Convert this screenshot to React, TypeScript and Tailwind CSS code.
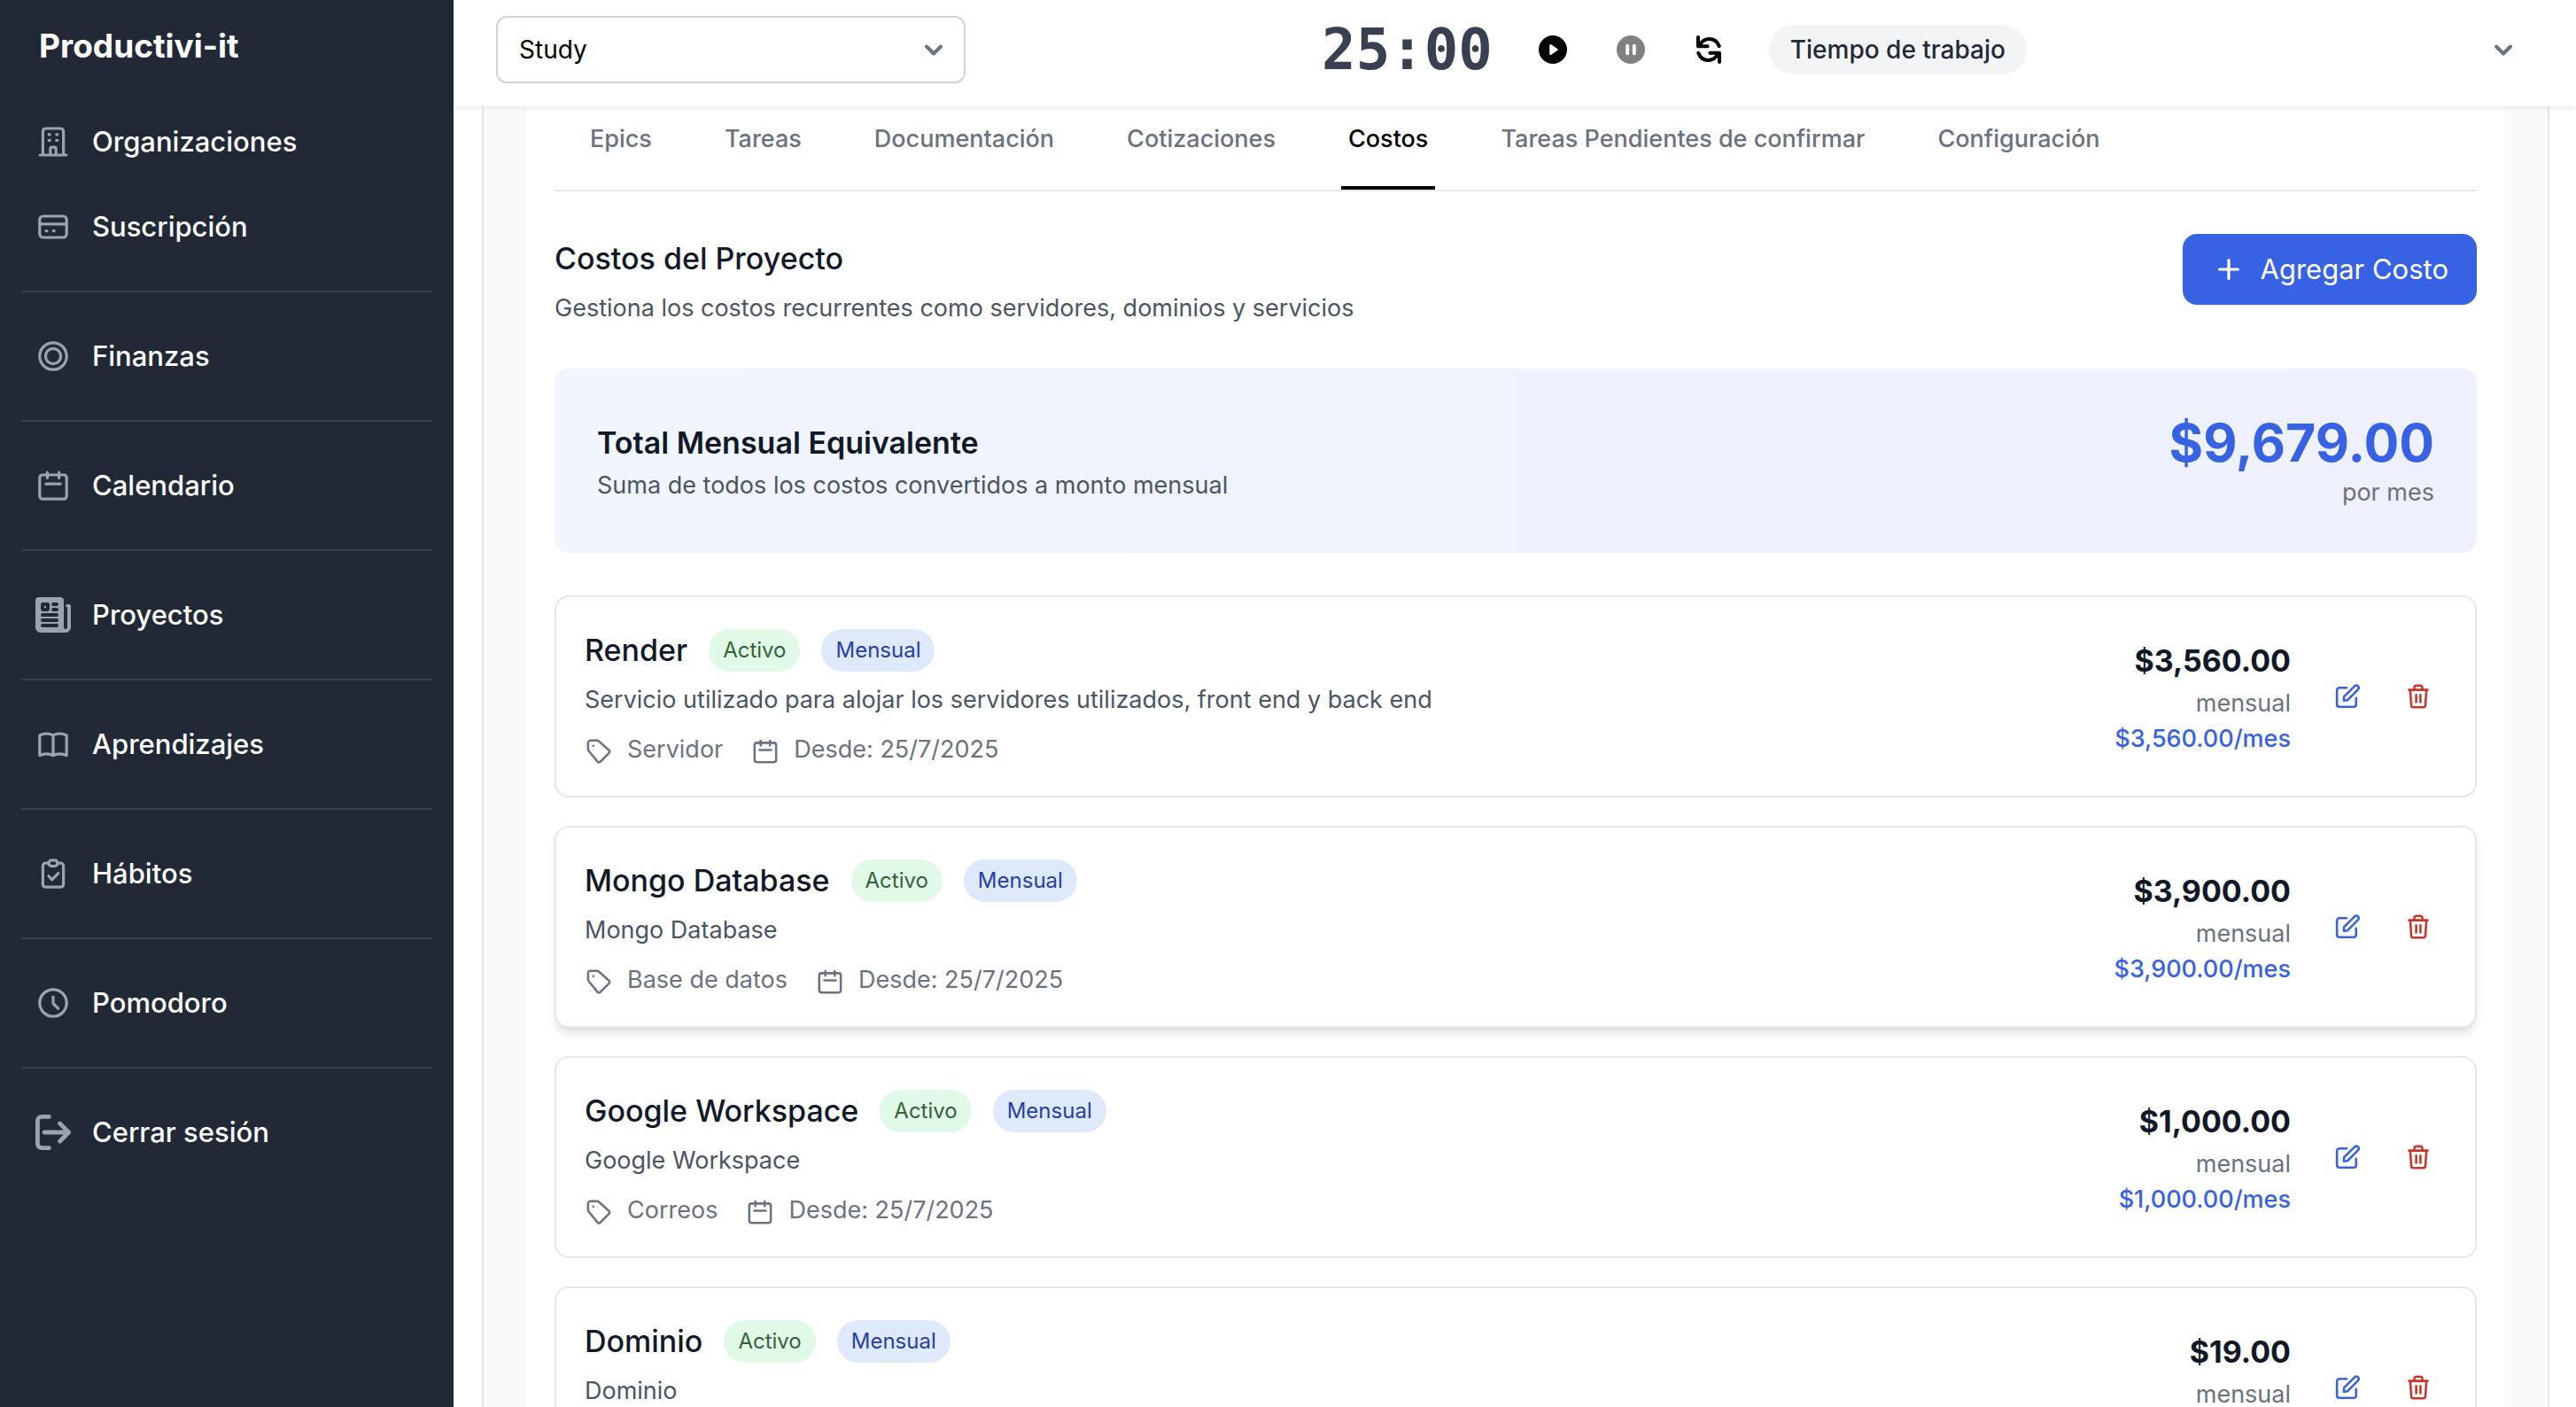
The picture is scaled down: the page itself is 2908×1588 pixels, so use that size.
import { useState } from "react";

interface IconProps {
  className?: string;
}

interface Cost {
  id: number;
  name: string;
  description: string;
  category: string;
  since: string;
  amount: number;
  highlighted?: boolean;
}

const costs: Cost[] = [
  {
    id: 1,
    name: "Render",
    description: "Servicio utilizado para alojar los servidores utilizados, front end y back end",
    category: "Servidor",
    since: "25/7/2025",
    amount: 3560,
  },
  {
    id: 2,
    name: "Mongo Database",
    description: "Mongo Database",
    category: "Base de datos",
    since: "25/7/2025",
    amount: 3900,
    highlighted: true,
  },
  {
    id: 3,
    name: "Google Workspace",
    description: "Google Workspace",
    category: "Correos",
    since: "25/7/2025",
    amount: 1000,
  },
  {
    id: 4,
    name: "Dominio",
    description: "Dominio",
    category: "Dominio",
    since: "25/7/2025",
    amount: 19,
  },
];

const tabs = [
  "Epics",
  "Tareas",
  "Documentación",
  "Cotizaciones",
  "Costos",
  "Tareas Pendientes de confirmar",
  "Configuración",
];

const formatMoney = (value: number) =>
  `$${value.toLocaleString("en-US", { minimumFractionDigits: 2, maximumFractionDigits: 2 })}`;

// Base for every outlined icon
const Outline = ({ className = "size-8", children }: IconProps & { children: React.ReactNode }) => (
  <svg
    viewBox="0 0 20 20"
    fill="none"
    stroke="currentColor"
    strokeWidth="1.6"
    strokeLinecap="round"
    strokeLinejoin="round"
    aria-hidden="true"
    className={`shrink-0 ${className}`}
  >
    {children}
  </svg>
);

const BuildingIcon = (props: IconProps) => (
  <Outline {...props}>
    <path d="M2.6 17.5h14.8M4.2 17.5V4.1a1.6 1.6 0 0 1 1.6-1.6h8.4a1.6 1.6 0 0 1 1.6 1.6v13.4" />
    <path d="M8.4 17.3v-3.2a1 1 0 0 1 1-1h1.2a1 1 0 0 1 1 1v3.2" />
    <path d="M7.6 5.9h.5M11.9 5.9h.5M7.6 9.2h.5M11.9 9.2h.5" />
  </Outline>
);

const CardIcon = (props: IconProps) => (
  <Outline {...props}>
    <rect x="2.4" y="4" width="15.2" height="12" rx="2" />
    <path d="M2.4 8.4h15.2M6 12.3h.5M10.1 12.3h.5" />
  </Outline>
);

const CoinIcon = (props: IconProps) => (
  <Outline {...props}>
    <circle cx="10" cy="10" r="7.6" />
    <circle cx="10" cy="10" r="4.3" />
  </Outline>
);

const CalendarIcon = (props: IconProps) => (
  <Outline {...props}>
    <rect x="2.4" y="4" width="15.2" height="13.6" rx="1.6" />
    <path d="M6.7 2.5v3.3M13.3 2.5v3.3M5.9 9.1h8.2" />
  </Outline>
);

const NewspaperIcon = ({ className }: IconProps) => (
  <svg viewBox="0 0 20 20" aria-hidden="true" className={`shrink-0 ${className}`}>
    <path
      fill="currentColor"
      d="M2 0h12a2 2 0 0 1 2 2v15a1 1 0 0 0 2 0V5.6a.8.8 0 0 1-.9-.8.8.8 0 0 1 .9-.8h1a1 1 0 0 1 1 1v12a3 3 0 0 1-3 3H3a3 3 0 0 1-3-3V2a2 2 0 0 1 2-2Z"
    />
    <rect x="3" y="3" width="5" height="5" rx="1.2" fill="#212936" />
    <rect x="5" y="5" width="1" height="1" fill="currentColor" />
    <path
      stroke="#212936"
      strokeWidth="2"
      strokeLinecap="round"
      d="M10.1 4h1.9M10.1 7h1.9M4 10h8M4 13h8M4 16h8"
    />
  </svg>
);

const BookIcon = (props: IconProps) => (
  <Outline {...props}>
    <path d="M10 5C9 4.3 7.8 4 6.3 4 4.9 4 3.6 4.3 2.4 5v11.3c1.2-.6 2.5-.9 3.9-.9 1.5 0 2.7.3 3.7 1 1-.7 2.2-1 3.7-1 1.4 0 2.7.3 3.9.9V5c-1.2-.7-2.5-1-3.9-1-1.5 0-2.7.3-3.7 1Zm0 0v11.4" />
  </Outline>
);

const ClipboardIcon = (props: IconProps) => (
  <Outline {...props}>
    <path d="M7.5 4.1H5.7a1.5 1.5 0 0 0-1.5 1.5v10.5a1.5 1.5 0 0 0 1.5 1.5h8.6a1.5 1.5 0 0 0 1.5-1.5V5.6a1.5 1.5 0 0 0-1.5-1.5h-1.8" />
    <rect x="7.5" y="2.4" width="5" height="3.4" rx="1.7" />
    <path d="m7.5 11.4 1.8 2 3.6-3.6" />
  </Outline>
);

const ClockIcon = (props: IconProps) => (
  <Outline {...props}>
    <circle cx="10" cy="10" r="7.6" />
    <path d="M10 6.5v3.8l2.8 2.8" />
  </Outline>
);

const LogoutIcon = ({ className }: IconProps) => (
  <svg
    viewBox="0 0 20 20"
    fill="none"
    stroke="currentColor"
    strokeWidth="2.4"
    strokeLinecap="round"
    strokeLinejoin="round"
    aria-hidden="true"
    className={`shrink-0 ${className}`}
  >
    <path d="M7.7 1.2H3.6a2.4 2.4 0 0 0-2.4 2.4v12.8a2.4 2.4 0 0 0 2.4 2.4h4.1M5 10h13.6M13.8 5l5 5-5 5" />
  </svg>
);

const TagIcon = (props: IconProps) => (
  <Outline {...props}>
    <path d="M2.4 8.2V4a1.6 1.6 0 0 1 1.6-1.6h4.9c.5 0 .9.2 1.2.5l7 6.3c.7.6.7 1.4.1 2l-6.1 6.1c-.6.6-1.4.6-2 0L2.9 9.7a2 2 0 0 1-.5-1.5Z" />
    <path d="M6.1 6.1v0" />
  </Outline>
);

const EditIcon = (props: IconProps) => (
  <Outline {...props}>
    <path d="M9.4 3.9H4.3a1.7 1.7 0 0 0-1.7 1.7v10.1a1.7 1.7 0 0 0 1.7 1.7h10.1a1.7 1.7 0 0 0 1.7-1.7v-4.6" />
    <path d="m7.4 12.9.2-2.8 7.5-7.4a1.7 1.7 0 0 1 2.4 2.4l-7.4 7.5-2.7.3Z" />
  </Outline>
);

const TrashIcon = (props: IconProps) => (
  <Outline {...props}>
    <path d="M3.4 5.4h13.2M4.3 5.6l.7 10.6a1.6 1.6 0 0 0 1.6 1.5h6.8a1.6 1.6 0 0 0 1.6-1.5l.7-10.6" />
    <path d="M7.2 5.2V3.8a1.4 1.4 0 0 1 1.4-1.4h2.8a1.4 1.4 0 0 1 1.4 1.4v1.4M8.5 9v5M11.5 9v5" />
  </Outline>
);

const PlusIcon = (props: IconProps) => (
  <Outline {...props}>
    <path d="M10 4.8v10.4M4.8 10h10.4" />
  </Outline>
);

const ChevronIcon = ({ className }: IconProps) => (
  <svg
    viewBox="0 0 24 24"
    fill="none"
    stroke="currentColor"
    strokeWidth="4"
    strokeLinecap="round"
    strokeLinejoin="round"
    aria-hidden="true"
    className={`size-6 shrink-0 text-[#6b7280] ${className}`}
  >
    <path d="m4 8.5 8 8 8-8" />
  </svg>
);

const PlayIcon = () => (
  <svg viewBox="0 0 32 32" aria-hidden="true" className="size-8">
    <circle cx="16" cy="16" r="16" fill="black" />
    <path
      d="M13.5 11.3 20.3 16l-6.8 4.7Z"
      fill="white"
      stroke="white"
      strokeWidth="2.6"
      strokeLinejoin="round"
    />
  </svg>
);

const PauseIcon = () => (
  <svg viewBox="0 0 32 32" aria-hidden="true" className="size-8">
    <circle cx="16" cy="16" r="16" fill="#808080" />
    <path d="M12.2 11.8v8.4M19.8 11.8v8.4" stroke="white" strokeWidth="4" strokeLinecap="round" />
  </svg>
);

const ResetIcon = () => (
  <svg
    viewBox="0 0 32 32"
    fill="none"
    stroke="black"
    strokeWidth="4"
    strokeLinecap="round"
    strokeLinejoin="round"
    aria-hidden="true"
    className="size-8"
  >
    <path d="M4 2v10.2h10.6M6.4 9.8C9 5.800 12.400 4 16.400 4c5 0 9.400 3 11.400 8.200" />
    <path d="M28 30V19.800H17.400M25.600 22.200C23 26.200 19.600 28 15.600 28c-5 0-9.400-3-11.400-8.200" />
  </svg>
);

const navGroups = [
  [
    { label: "Organizaciones", Icon: BuildingIcon },
    { label: "Suscripción", Icon: CardIcon },
  ],
  [{ label: "Finanzas", Icon: CoinIcon }],
  [{ label: "Calendario", Icon: CalendarIcon }],
  [{ label: "Proyectos", Icon: NewspaperIcon }],
  [{ label: "Aprendizajes", Icon: BookIcon }],
  [{ label: "Hábitos", Icon: ClipboardIcon }],
  [{ label: "Pomodoro", Icon: ClockIcon }],
  [{ label: "Cerrar sesión", Icon: LogoutIcon }],
];

const Sidebar = () => (
  <aside className="w-128 shrink-0 bg-[#212936] px-6 pt-6 text-white">
    <h1 className="px-5 text-[37px] leading-14 font-bold">Productivi-it</h1>
    <nav className="mt-10">
      {navGroups.map((group, index) => (
        <div
          key={index}
          className="flex flex-col gap-4 border-[#384150] not-first:mt-8 not-first:border-t-2 not-first:pt-8"
        >
          {group.map(({ label, Icon }) => (
            <a
              key={label}
              href="#"
              className="flex items-center gap-6 rounded-lg px-4 py-4 text-[31px] leading-12 font-medium"
            >
              <Icon className="size-10 text-[#9ca3af]" />
              {label}
            </a>
          ))}
        </div>
      ))}
    </nav>
  </aside>
);

const Header = () => {
  const [organization, setOrganization] = useState("study");

  return (
    <header className="relative z-10 flex h-30 shrink-0 items-center justify-between bg-white pr-[46px] pb-2 pl-12 shadow-[0_2px_6px_rgba(0,0,0,0.08)]">
      <div className="relative w-[530px]">
        <select
          aria-label="Organización"
          value={organization}
          onChange={(e) => setOrganization(e.target.value)}
          className="h-19 w-full appearance-none rounded-xl border-2 border-[#d1d5db] bg-white px-6 text-[28px] leading-10 text-black"
        >
          <option value="study">Study</option>
        </select>
        <ChevronIcon className="pointer-events-none absolute top-1/2 right-6 -translate-y-1/2" />
      </div>
      {/* Pomodoro */}
      <div className="flex items-center gap-10">
        <span className="font-['DejaVu_Sans_Mono',monospace] text-[64px] leading-18 font-bold text-[#374151]">
          25:00
        </span>
        <div className="flex gap-8">
          <button type="button" aria-label="Iniciar" className="p-3">
            <PlayIcon />
          </button>
          <button type="button" aria-label="Pausar" className="p-3">
            <PauseIcon />
          </button>
          <button type="button" aria-label="Reiniciar" className="p-3">
            <ResetIcon />
          </button>
        </div>
        <span className="rounded-full bg-[#f3f4f6] px-6 py-2 text-[28px] leading-10 font-medium text-[#1f2937]">
          Tiempo de trabajo
        </span>
      </div>
      <button type="button" aria-label="Cuenta" className="flex w-43 justify-end px-6 py-4">
        <ChevronIcon />
      </button>
    </header>
  );
};

const CostCard = ({ cost }: { cost: Cost }) => (
  <li
    className={`flex items-center justify-between rounded-2xl border-2 border-[#e5e7eb] bg-white p-8 ${
      cost.highlighted ? "shadow-[0_8px_12px_-2px_rgba(0,0,0,0.1),0_4px_8px_-4px_rgba(0,0,0,0.1)]" : ""
    }`}
  >
    <div>
      <div className="flex items-center gap-6">
        <h3 className="text-[34px] leading-14 font-medium text-[#111827]">{cost.name}</h3>
        <span className="rounded-full bg-[#e1fae7] px-4 py-2 text-2xl leading-8 text-[#306339]">Activo</span>
        <span className="rounded-full bg-[#dee9fc] px-4 py-2 text-2xl leading-8 text-[#2640a8]">Mensual</span>
      </div>
      <p className="mt-2 text-[27px] leading-10 text-[#4b5563]">{cost.description}</p>
      <div className="mt-4 flex gap-8 text-[27px] leading-10 text-[#6b7280]">
        <span className="flex items-center gap-4">
          <TagIcon className="mt-1 size-8" />
          {cost.category}
        </span>
        <span className="flex items-center gap-4">
          <CalendarIcon className="mt-1 size-8" />
          Desde: {cost.since}
        </span>
      </div>
    </div>
    <div className="flex items-center gap-8">
      <div className="text-right text-[27px] leading-10">
        <p className="text-[34px] leading-14 font-bold text-[#111827]">{formatMoney(cost.amount)}</p>
        <p className="text-[#6b7280]">mensual</p>
        <p className="font-medium text-[#3662e3]">{formatMoney(cost.amount)}/mes</p>
      </div>
      <div className="flex gap-4">
        <button type="button" aria-label={`Editar ${cost.name}`} className="p-4 text-[#3662e3]">
          <EditIcon />
        </button>
        <button type="button" aria-label={`Eliminar ${cost.name}`} className="p-4 text-[#c9372c]">
          <TrashIcon />
        </button>
      </div>
    </div>
  </li>
);

const App: React.FC = () => {
  const [activeTab, setActiveTab] = useState("Costos");

  return (
    <div className="flex h-screen overflow-hidden bg-white font-['Inter',sans-serif]">
      <Sidebar />
      <div className="flex min-w-0 flex-1 flex-col">
        <Header />
        <main className="min-h-0 flex-1 overflow-hidden pr-[30px] pl-8">
          <div className="border-x-2 border-[#e5e7eb] bg-[#f9fafb] px-12">
            <div className="bg-white px-8 pt-4">
              {/* Tabs */}
              <div className="flex gap-[66px] border-b-2 border-[#e5e7eb] px-8">
                {tabs.map((tab) => (
                  <button
                    key={tab}
                    type="button"
                    onClick={() => setActiveTab(tab)}
                    className={`border-b-4 px-2 pb-8 text-[27px] leading-[42px] font-medium whitespace-nowrap ${
                      tab === activeTab ? "border-black text-black" : "border-transparent text-[#6b7280]"
                    }`}
                  >
                    {tab}
                  </button>
                ))}
              </div>

              <section className="pt-12">
                <div className="flex items-start justify-between">
                  <div>
                    <h2 className="text-[34px] leading-14 font-medium text-[#111827]">Costos del Proyecto</h2>
                    <p className="mt-2 text-[27px] leading-10 text-[#4b5563]">
                      Gestiona los costos recurrentes como servidores, dominios y servicios
                    </p>
                  </div>
                  <button
                    type="button"
                    className="flex items-center gap-4 rounded-2xl bg-[#3662e3] px-8 py-4 text-[31px] leading-12 text-white"
                  >
                    <PlusIcon className="size-10" />
                    Agregar Costo
                  </button>
                </div>

                {/* Monthly total */}
                <div className="mt-12 flex items-center justify-between rounded-2xl bg-linear-to-r from-[#f0f5fe] to-[#eef0fe] p-12">
                  <div>
                    <h3 className="text-[34px] leading-14 font-semibold text-[#111827]">
                      Total Mensual Equivalente
                    </h3>
                    <p className="text-[27px] leading-10 text-[#4b5563]">
                      Suma de todos los costos convertidos a monto mensual
                    </p>
                  </div>
                  <div className="text-right">
                    <p className="text-[59px] leading-18 font-bold text-[#3662e3]">{formatMoney(9679)}</p>
                    <p className="text-[27px] leading-10 text-[#6b7280]">por mes</p>
                  </div>
                </div>

                <ul className="mt-12 flex flex-col gap-8">
                  {costs.map((cost) => (
                    <CostCard key={cost.id} cost={cost} />
                  ))}
                </ul>
              </section>
            </div>
          </div>
        </main>
      </div>
    </div>
  );
};

export default App;
